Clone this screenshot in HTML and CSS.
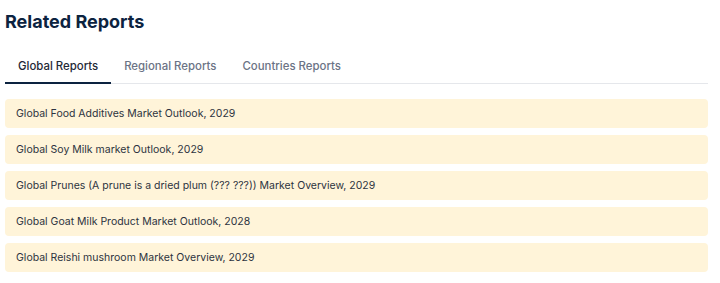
FILE: index.html
```html
<!DOCTYPE html>
<html lang="en">
<head>
    <meta charset="UTF-8">
    <meta name="viewport" content="width=device-width, initial-scale=1.0">
    <title>Related Reports</title>
    <link rel="stylesheet" href="styles.css">
</head>
<body>
    <div class="related">
        <h2 class="related-title">Related Reports</h2>

        <!-- Tabs -->
        <div class="tabs">
            <div class="tab active">Global Reports</div>
            <div class="tab">Regional Reports</div>
            <div class="tab">Countries Reports</div>
        </div>

        <!-- Report list -->
        <div class="report-list">
            <a class="report-item" href="#">Global Food Additives Market Outlook, 2029</a>
            <a class="report-item" href="#">Global Soy Milk market Outlook, 2029</a>
            <a class="report-item" href="#">Global Prunes (A prune is a dried plum (??? ???)) Market Overview, 2029</a>
            <a class="report-item" href="#">Global Goat Milk Product Market Outlook, 2028</a>
            <a class="report-item" href="#">Global Reishi mushroom Market Overview, 2029</a>
        </div>
    </div>
</body>
</html>
```

FILE: styles.css
```css
/* General Reset */
* {
    margin: 0;
    padding: 0;
    box-sizing: border-box;
}

body {
    font-family: Inter, "Noto Sans", Arial, sans-serif;
    background-color: #ffffff;
    color: #1f2937;
}

/* Container */
.related {
    width: 708px;
    padding: 10px 0 0 5px;
}

.related-title {
    font-size: 18px;
    font-weight: 700;
    color: #0c2340;
    line-height: 24px;
}

/* Tabs */
.tabs {
    display: flex;
    margin-top: 16px;
    border-bottom: 1px solid #e5e7eb;
}

.tab {
    padding: 8px 13px 8px;
    font-size: 11.4px;
    font-weight: 500;
    color: #6b7385;
    line-height: 16px;
    border-bottom: 2px solid transparent;
    margin-bottom: -1px;
}

.tab.active {
    color: #1f2937;
    border-bottom-color: #0c2340;
}

/* Report list */
.report-list {
    display: flex;
    flex-direction: column;
    gap: 7px;
    margin-top: 15px;
}

.report-item {
    display: block;
    height: 29px;
    line-height: 29px;
    padding: 0 11px;
    background-color: #fff4d9;
    border-radius: 4px;
    font-size: 10.5px;
    color: #2d3340;
    text-decoration: none;
}
```
